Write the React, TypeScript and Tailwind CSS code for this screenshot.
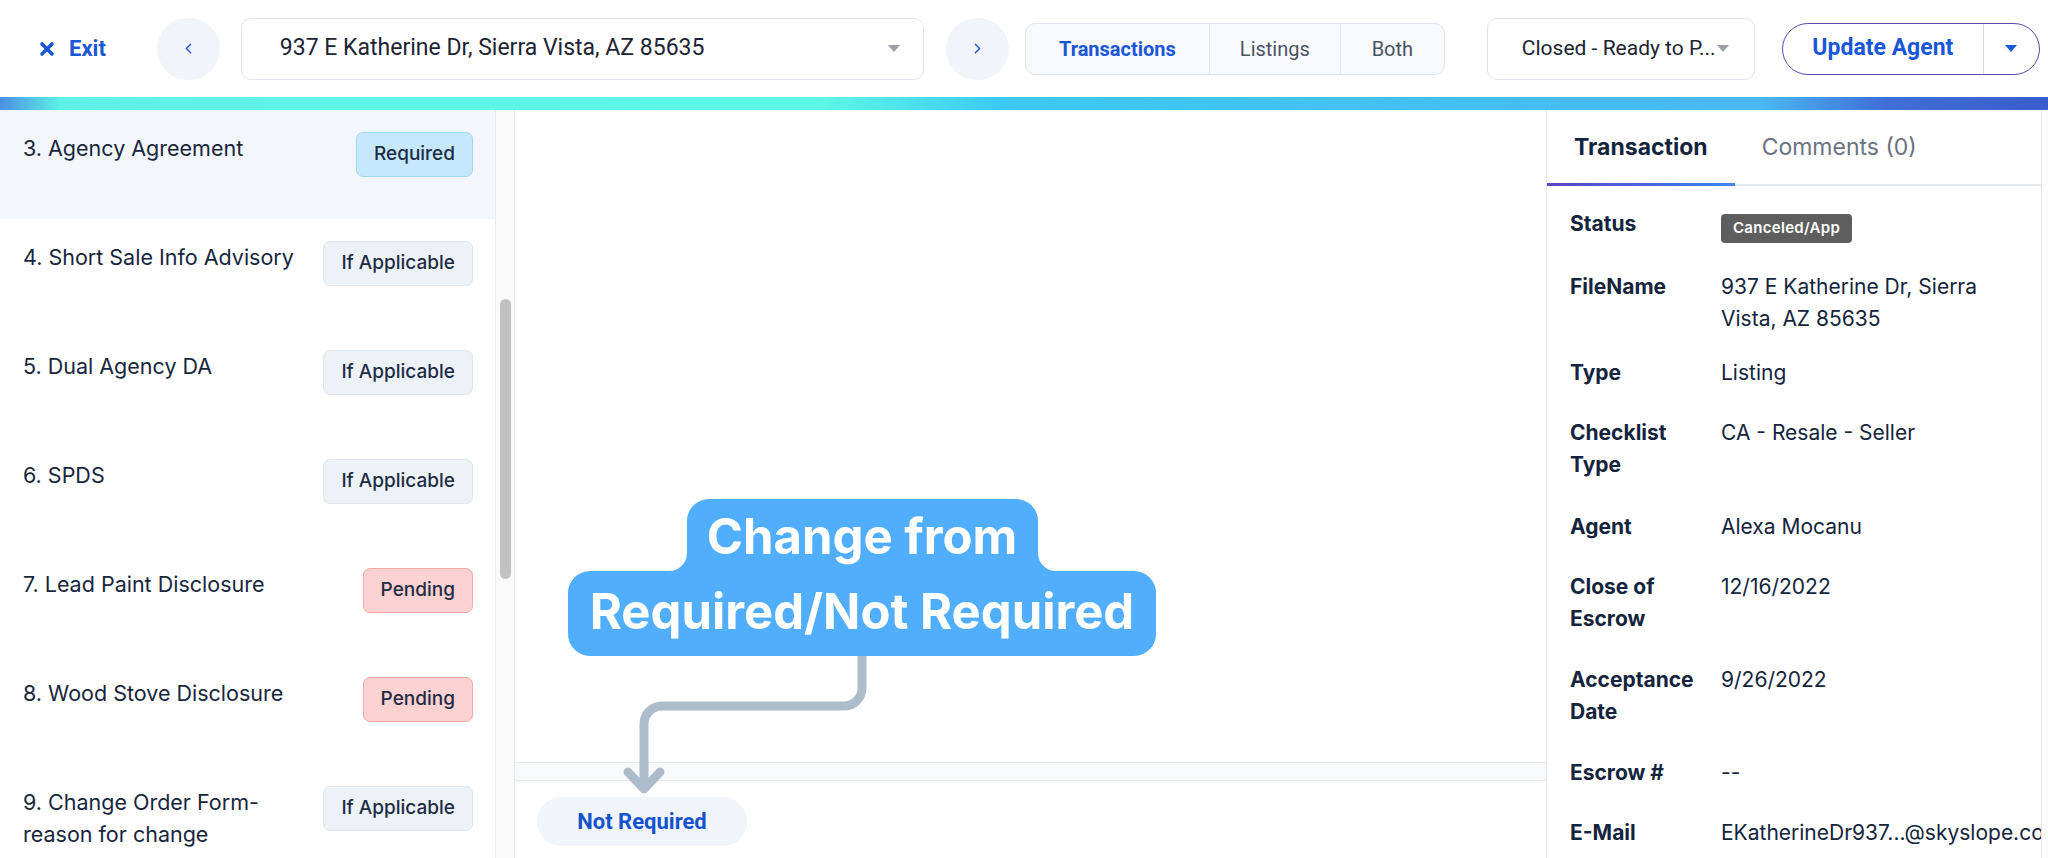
import React from "react";
import { ChevronLeft, ChevronRight } from "lucide-react";

type Status = "Required" | "If Applicable" | "Pending";

const checklist: { label: string; status: Status; active?: boolean }[] = [
  { label: "3. Agency Agreement", status: "Required", active: true },
  { label: "4. Short Sale Info Advisory", status: "If Applicable" },
  { label: "5. Dual Agency DA", status: "If Applicable" },
  { label: "6. SPDS", status: "If Applicable" },
  { label: "7. Lead Paint Disclosure", status: "Pending" },
  { label: "8. Wood Stove Disclosure", status: "Pending" },
  { label: "9. Change Order Form-reason for change", status: "If Applicable" },
];

const badgeStyles: Record<Status, string> = {
  Required: "bg-[#c5e8fc] border-[#a3d6f6]",
  "If Applicable": "bg-[#edf2f8] border-[#dfe6ef]",
  Pending: "bg-[#fbd1d1] border-[#f3a8a8]",
};

const details: { label: string; value?: string; badge?: string; mb: string }[] = [
  { label: "Status", badge: "Canceled/App", mb: "mb-[28px]" },
  { label: "FileName", value: "937 E Katherine Dr, Sierra Vista, AZ 85635", mb: "mb-[22px]" },
  { label: "Type", value: "Listing", mb: "mb-[28px]" },
  { label: "Checklist Type", value: "CA - Resale - Seller", mb: "mb-[30px]" },
  { label: "Agent", value: "Alexa Mocanu", mb: "mb-[28px]" },
  { label: "Close of Escrow", value: "12/16/2022", mb: "mb-[29px]" },
  { label: "Acceptance Date", value: "9/26/2022", mb: "mb-[29px]" },
  { label: "Escrow #", value: "--", mb: "mb-[28px]" },
  { label: "E-Mail", value: "EKatherineDr937...@skyslope.com", mb: "mb-0" },
];

const Caret = ({ className }: { className: string }) => (
  <svg width="12" height="7" viewBox="0 0 12 7" className={className}>
    <path d="M0 0 L12 0 L6 7 Z" fill="currentColor" />
  </svg>
);

const Header = () => (
  <header className="h-[97px] flex items-center font-['Roboto',sans-serif]">
    {/* Exit */}
    <button className="ml-[39px] flex items-center gap-[14px] text-[#1a57d6] font-bold text-[22px]">
      <svg width="16" height="16" viewBox="0 0 16 16">
        <path d="M3 3 L13 13 M13 3 L3 13" stroke="currentColor" strokeWidth="3.6" strokeLinecap="round" />
      </svg>
      Exit
    </button>

    <button className="ml-[51px] w-[63px] h-[62px] rounded-full bg-[#f1f5fb] flex items-center justify-center text-[#1a57d6]">
      <ChevronLeft size={17} strokeWidth={2} />
    </button>

    {/* Address select */}
    <div className="ml-[21px] w-[683px] h-[62px] rounded-[10px] border border-[#e1e6ee] flex items-center pl-[38px] pr-[23px]">
      <span className="flex-1 text-[23px] text-[#1c2433]">937 E Katherine Dr, Sierra Vista, AZ 85635</span>
      <Caret className="text-[#9aa1ab]" />
    </div>

    <button className="ml-[22px] w-[63px] h-[62px] rounded-full bg-[#f1f5fb] flex items-center justify-center text-[#1a57d6]">
      <ChevronRight size={17} strokeWidth={2} />
    </button>

    {/* Segmented */}
    <div className="ml-[16px] h-[52px] w-[420px] flex rounded-[10px] border border-[#e1e6ee] bg-[#f7f9fd] text-[20px]">
      <div className="w-[184px] flex items-center justify-center font-bold text-[#1a57d6] border-r border-[#e1e6ee]">
        Transactions
      </div>
      <div className="w-[131px] flex items-center justify-center text-[#4a5363] border-r border-[#e1e6ee]">
        Listings
      </div>
      <div className="flex-1 flex items-center justify-center text-[#4a5363]">Both</div>
    </div>

    {/* Status select */}
    <div className="ml-[42px] w-[268px] h-[62px] rounded-[10px] border border-[#e1e6ee] flex items-center pl-[34px] pr-[16px]">
      <span className="text-[21px] text-[#1c2433] whitespace-nowrap">Closed - Ready to P...</span>
      <Caret className="ml-[1px] text-[#9aa1ab]" />
    </div>

    {/* Update Agent */}
    <div className="ml-[27px] w-[258px] h-[52px] rounded-full border-[1.5px] border-[#5a4bb3] flex text-[#1a57d6]">
      <div className="w-[201px] flex items-center justify-center font-bold text-[23px] border-r border-[#d6dae2]">
        Update Agent
      </div>
      <div className="flex-1 flex items-center justify-center">
        <Caret className="" />
      </div>
    </div>
  </header>
);

const ChecklistPanel = () => (
  <aside className="w-[495px] h-full overflow-hidden font-['Inter',sans-serif] text-[#17263d]">
    {checklist.map((item) => (
      <div
        key={item.label}
        className={`h-[109px] flex items-start justify-between gap-[16px] pt-[22px] pl-[23px] pr-[22px] ${
          item.active ? "bg-[#f3f6fb]" : "bg-white"
        }`}
      >
        <span className="flex-1 text-[21.5px] leading-[32px]">{item.label}</span>
        <span
          className={`h-[45px] px-[17px] flex items-center rounded-[7px] border text-[19px] font-medium text-[#1d2c44] whitespace-nowrap ${
            badgeStyles[item.status]
          }`}
        >
          {item.status}
        </span>
      </div>
    ))}
  </aside>
);

const DetailsPanel = () => (
  <section className="w-[496px] mr-[6px] h-full border-l border-r border-[#e4e7ec] overflow-hidden font-['Inter',sans-serif] text-[#14243d]">
    <div className="h-[76px] flex border-b-2 border-[#e5e8ed]">
      <div className="relative px-[27px] flex items-center font-bold text-[23px]">
        Transaction
        <div className="absolute left-0 right-0 bottom-[-2px] h-[3px] bg-[linear-gradient(90deg,#5a44c4,#3a86f0)]" />
      </div>
      <div className="px-[27px] flex items-center text-[23px] text-[#6b7280]">Comments (0)</div>
    </div>
    <div className="pt-[22px] pl-[23px] pr-[20px]">
      {details.map((d) => (
        <div key={d.label} className={`flex items-start ${d.mb}`}>
          <div className="w-[141px] mr-[10px] shrink-0 font-bold text-[21px] leading-[32px]">{d.label}</div>
          {d.badge ? (
            <span className="mt-[6px] h-[29px] px-[12px] flex items-center rounded-[4px] bg-[#5e5e5e] text-white text-[15px] font-semibold tracking-[0.3px]">
              {d.badge}
            </span>
          ) : (
            <div
              className={`text-[21px] leading-[32px] ${d.label === "E-Mail" ? "whitespace-nowrap" : ""}`}
            >
              {d.value}
            </div>
          )}
        </div>
      ))}
    </div>
  </section>
);

const Callout = () => (
  <div className="absolute inset-0 pointer-events-none">
    <svg width="2048" height="858" className="absolute inset-0">
      <path
        d="M862 656 V688 A18 18 0 0 1 844 706 H662 A18 18 0 0 0 644 724 V788"
        fill="none"
        stroke="#adbccb"
        strokeWidth="9"
        strokeLinecap="round"
        strokeLinejoin="round"
      />
      <path
        d="M628 772 L644 789 L660 772"
        fill="none"
        stroke="#adbccb"
        strokeWidth="9"
        strokeLinecap="round"
        strokeLinejoin="round"
      />
    </svg>
    <div className="absolute left-[568px] top-[499px] w-[588px] h-[157px]">
      <svg width="588" height="157" className="absolute inset-0">
        <path
          d="M141 0 H448 A22 22 0 0 1 470 22 V54 A18 18 0 0 0 488 72 H566 A22 22 0 0 1 588 94 V135 A22 22 0 0 1 566 157 H22 A22 22 0 0 1 0 135 V94 A22 22 0 0 1 22 72 H101 A18 18 0 0 0 119 54 V22 A22 22 0 0 1 141 0 Z"
          fill="#50aefc"
        />
      </svg>
      <div className="relative flex flex-col items-center text-white font-bold font-['Inter',sans-serif] text-[49px] leading-[76px]">
        <span className="h-[72px]">Change from</span>
        <span className="h-[85px] leading-[82px]">Required/Not Required</span>
      </div>
    </div>
  </div>
);

export default function App() {
  return (
    <div className="relative w-[2048px] h-[858px] overflow-hidden bg-white">
      <Header />
      <div className="h-[13px] bg-[linear-gradient(90deg,#4a8fe3_0%,#5ef2e6_3%,#5ef7e6_40%,#3cc9f3_49%,#4ab8f3_86%,#3f6fd6_92%,#3a5dcc_100%)]" />
      <div className="flex h-[748px]">
        <ChecklistPanel />
        <div className="w-[20px] h-full bg-[#fafafa] border-l border-r border-[#e8eaee]">
          <div className="mt-[189px] mx-auto w-[11px] h-[280px] rounded-full bg-[#c1c1c1]" />
        </div>
        <main className="flex-1 flex flex-col">
          <div className="flex-1" />
          <div className="h-[19px] bg-[#f8f9fa] border-y border-[#e6e8ec]" />
          <div className="h-[77px] pt-[16px] pl-[22px]">
            <div className="w-[210px] h-[49px] rounded-full bg-[#f0f5fc] flex items-center justify-center font-['Roboto',sans-serif] font-bold text-[22px] text-[#1652cc]">
              Not Required
            </div>
          </div>
        </main>
        <DetailsPanel />
      </div>
      <Callout />
    </div>
  );
}
